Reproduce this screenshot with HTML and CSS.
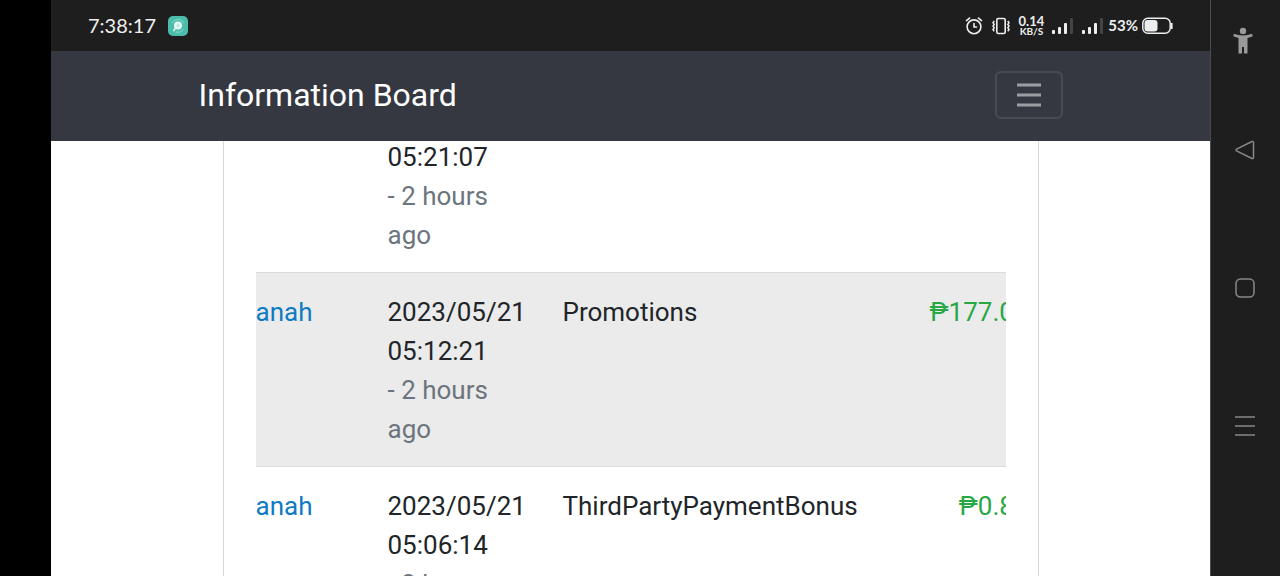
FILE: index.html
```
<!DOCTYPE html>
<html lang="en">
<head>
  <meta charset="UTF-8">
  <meta name="viewport" content="width=device-width, initial-scale=1.0">
  <title>Information Board</title>
  <link rel="stylesheet" href="styles.css">
</head>
<body>
  <div class="cutout"></div>

  <div class="screen">
    <div class="status-bar">
      <span class="clock">7:38:17</span>
      <svg class="app-icon" width="20" height="20" viewBox="0 0 20 20">
        <rect width="20" height="20" rx="5" fill="#4dbdab"/>
        <path d="M4 7a7 7 0 0 1 12 0M15.500 13.500a7 7 0 0 1-8 2.500" fill="none" stroke="#8edbcd" stroke-width="1"/>
        <path d="M7.500 12l-2 3" stroke="#e6f8f5" stroke-width="1.500"/>
        <circle cx="10" cy="9.500" r="4" fill="#e6f8f5"/>
        <circle cx="10" cy="9.500" r="1.500" fill="#b5e8df"/>
      </svg>

      <div class="status-icons">
        <svg width="18" height="18" viewBox="0 0 18 18" fill="none" stroke="#eee" stroke-width="1.600" stroke-linecap="round">
          <circle cx="9" cy="9.800" r="6.900"/>
          <path d="M9 6.500v3.500h2.500M1.500 3.600l3-2.500M16.500 3.600l-3-2.500"/>
        </svg>
        <svg width="20" height="18" viewBox="0 0 20 18" fill="none" stroke="#eee" stroke-width="1.600">
          <rect x="5.800" y="1.500" width="8.400" height="15" rx="1.500"/>
          <path d="M3.200 4l-1.200 1.700 1.200 1.700-1.200 1.700 1.200 1.700-1.200 1.700 1.200 1.700M16.800 4l1.200 1.700-1.200 1.700 1.200 1.700-1.200 1.700 1.200 1.700-1.200 1.700" stroke-width="1.500"/>
        </svg>
        <div class="speed">
          <span class="speed-value">0.14</span>
          <span class="speed-unit">KB/S</span>
        </div>
        <svg width="22" height="18" viewBox="0 0 22 18" fill="#eee">
          <rect x="0" y="13" width="3" height="4" rx="1"/>
          <rect x="6" y="10" width="3" height="7" rx="1"/>
          <rect x="12" y="6" width="3" height="11" rx="1"/>
          <rect x="18" y="1" width="3" height="16" rx="1" fill="#444"/>
        </svg>
        <svg width="22" height="18" viewBox="0 0 22 18" fill="#eee">
          <rect x="0" y="13" width="3" height="4" rx="1"/>
          <rect x="6" y="10" width="3" height="7" rx="1"/>
          <rect x="12" y="6" width="3" height="11" rx="1"/>
          <rect x="18" y="1" width="3" height="16" rx="1" fill="#444"/>
        </svg>
        <span class="battery-level">53%</span>
        <svg width="31" height="18" viewBox="0 0 31 18">
          <rect x="0.800" y="1.300" width="27.400" height="15" rx="5" fill="none" stroke="#eee" stroke-width="1.500"/>
          <rect x="2.500" y="3" width="13" height="11.600" rx="3" fill="#eee"/>
          <path d="M29.800 6v6" stroke="#eee" stroke-width="1.600"/>
        </svg>
      </div>
    </div>

    <header class="navbar">
      <div class="container navbar-inner">
        <a class="brand" href="#">Information Board</a>
        <button class="toggler" type="button" aria-label="Toggle navigation">
          <svg width="24" height="24" viewBox="0 0 24 24" stroke="#9b9ea2" stroke-width="3">
            <path d="M0 2h24M0 12h24M0 22h24"/>
          </svg>
        </button>
      </div>
    </header>

    <main class="content">
      <div class="container content-inner">
        <div class="card">
          <div class="table-wrap">
            <table class="history">
              <tbody>
                <tr class="row-cut">
                  <td class="user"></td>
                  <td class="date">05:21:07 <span class="ago">- 2 hours ago</span></td>
                  <td class="type"></td>
                  <td class="amount"></td>
                </tr>
                <tr class="row-shaded">
                  <td class="user"><a href="#">anah</a></td>
                  <td class="date">2023/05/21 05:12:21 <span class="ago">- 2 hours ago</span></td>
                  <td class="type">Promotions</td>
                  <td class="amount">₱177.00</td>
                </tr>
                <tr>
                  <td class="user"><a href="#">anah</a></td>
                  <td class="date">2023/05/21 05:06:14 <span class="ago">- 2 hours ago</span></td>
                  <td class="type">ThirdPartyPaymentBonus</td>
                  <td class="amount">₱0.80</td>
                </tr>
              </tbody>
            </table>
          </div>
        </div>
      </div>
    </main>
  </div>

  <nav class="nav-rail">
    <button class="rail-button rail-access" type="button" aria-label="Accessibility">
      <svg width="20" height="28" viewBox="0 0 20 28" fill="#999">
        <circle cx="10" cy="4" r="3.200"/>
        <path d="M0.800 6.800Q10 10 19.200 6.800L19.700 9.300Q17 10.500 14.500 10.900V26.500H11V20H9V26.500H5.500V10.900Q3 10.500 0.300 9.300Z"/>
      </svg>
    </button>
    <button class="rail-button" type="button" aria-label="Back">
      <svg width="20" height="20" viewBox="0 0 20 20" fill="none" stroke="#888" stroke-width="1.500" stroke-linejoin="round">
        <path d="M1.500 9.200Q0.500 10 1.500 10.800L17 18.500Q18.500 19 18.500 17.500V2.500Q18.500 1 17 1.500Z"/>
      </svg>
    </button>
    <button class="rail-button" type="button" aria-label="Home">
      <svg width="20" height="20" viewBox="0 0 20 20" fill="none" stroke="#888" stroke-width="1.500">
        <rect x="1" y="1" width="18" height="18" rx="4.500"/>
      </svg>
    </button>
    <button class="rail-button" type="button" aria-label="Recent apps">
      <svg width="20" height="20" viewBox="0 0 20 20" stroke="#888" stroke-width="1.500">
        <path d="M0 1h20M0 10h20M0 19h20"/>
      </svg>
    </button>
  </nav>
</body>
</html>
```

FILE: styles.css
```
* {
  box-sizing: border-box;
}

body {
  display: flex;
  height: 100vh;
  margin: 0;
  overflow: hidden;
  background: #fff;
  color: #212529;
  font-family: Roboto, sans-serif;
  font-size: 26px;
  line-height: 39px;
}

svg {
  display: block;
  flex: none;
}

a {
  color: #0f7bc4;
  text-decoration: none;
}

.cutout {
  flex: none;
  width: 51px;
  background: #000;
}

.screen {
  display: flex;
  flex: 1;
  flex-direction: column;
  min-width: 0;
}

/* status bar */
.status-bar {
  display: flex;
  flex: none;
  align-items: center;
  height: 51px;
  padding: 0 37px;
  background: #1e1e1e;
  color: #eee;
  font-family: Lato, sans-serif;
}

.clock {
  font-size: 20px;
}

.app-icon {
  margin-left: 12px;
}

.status-icons {
  display: flex;
  align-items: center;
  gap: 8px;
  margin-left: auto;
}

.speed {
  display: flex;
  flex-direction: column;
  align-items: center;
  font-weight: bold;
  line-height: 10px;
}

.speed-value {
  font-size: 13px;
}

.speed-unit {
  font-size: 10px;
}

.battery-level {
  margin: 0 -4px;
  font-size: 15px;
  font-weight: bold;
}

/* navbar */
.container {
  width: 100%;
  max-width: 864px;
  margin: 0 auto;
}

.navbar {
  flex: none;
  padding: 20px 0 22px;
  background: #353840;
}

.navbar-inner {
  display: flex;
  align-items: center;
  justify-content: space-between;
}

.brand {
  color: #fff;
  font-size: 32px;
}

.toggler {
  display: flex;
  align-items: center;
  justify-content: center;
  width: 68px;
  height: 48px;
  padding: 0;
  border: 2px solid #484b52;
  border-radius: 6px;
  background: transparent;
}

/* table */
.content {
  flex: 1;
  min-height: 0;
  overflow: hidden;
}

.content-inner {
  padding: 0 24px;
}

.card {
  padding: 0 32px;
  border: solid #d8d8d8;
  border-width: 0 1px;
}

.table-wrap {
  overflow: hidden;
}

.history {
  width: 792px;
  margin-top: -3px;
  border-collapse: separate;
  border-spacing: 0;
  table-layout: fixed;
}

.history td {
  padding: 20px 19px 17px;
  border-top: 1px solid #d9dbdd;
  vertical-align: top;
}

.history .row-cut td {
  padding-top: 0;
  border-top: 0;
}

.history .user {
  width: 113px;
  padding-left: 0;
}

.history .date {
  width: 175px;
}

.history .type {
  width: 330px;
}

.history .amount {
  color: #28a745;
  text-align: right;
}

.row-shaded {
  background: #ebebeb;
}

.ago {
  display: block;
  color: #6c757d;
}

/* system navigation */
.nav-rail {
  display: flex;
  flex: none;
  flex-direction: column;
  width: 70px;
  border-left: 1px solid #4a4a4a;
  background: #1e1e1e;
}

.rail-button {
  display: flex;
  flex: none;
  align-items: center;
  justify-content: center;
  height: 138px;
  padding: 0 2px 0 0;
  border: 0;
  background: transparent;
}

.rail-access {
  height: 81px;
  padding-right: 6px;
}
```
